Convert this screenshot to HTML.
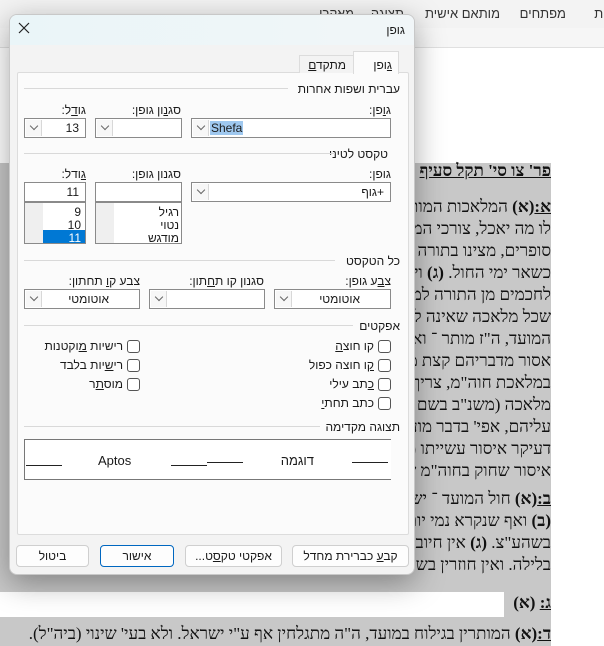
<!DOCTYPE html>
<html><head><meta charset="utf-8">
<style>
*{box-sizing:border-box;margin:0;padding:0}
body{width:604px;height:646px;position:relative;overflow:hidden;background:#fff;font-family:"Liberation Sans","DejaVu Sans",sans-serif;font-size:12px;color:#1a1a1a}
.a{position:absolute}
.r{position:absolute;direction:rtl;white-space:nowrap;line-height:14px}
.doc{position:absolute;right:53px;direction:rtl;white-space:nowrap;font-family:"Liberation Serif","DejaVu Serif",serif;font-size:17px;color:#111;line-height:22px;overflow:hidden}
.ln{position:absolute;height:1px;background:#d9d9d9}
.f{position:absolute;background:#fff;border:1px solid #8a8a8a;height:20px}
.dd{position:absolute;left:1px;top:1px;width:16px;height:16px;border-right:1px solid #d8d8d8;background:#f7f7f7}
.dd:after{content:"";position:absolute;left:5px;top:3px;width:5px;height:5px;border-right:1px solid #666;border-bottom:1px solid #666;transform:rotate(45deg)}
.ft{position:absolute;right:6px;top:2px;direction:rtl;font-size:12px;line-height:14px;white-space:nowrap}
.cb{position:absolute;width:13px;height:13px;border:1px solid #555;border-radius:3px;background:#fff}
.btn{position:absolute;top:545px;height:22px;border:1px solid #cfcfcf;border-radius:4px;background:#fdfdfd;text-align:center;line-height:20px;direction:rtl;font-size:12px;white-space:nowrap}
</style></head><body>
<div class="a" style="left:0;top:0;width:604px;height:28px;background:#f3f3f3"></div>
<div class="a" style="left:0;top:28px;width:604px;height:20px;background:#f6f6f6;border-bottom:1px solid #e0e0e0"></div>
<div class="r" style="right:-6px;top:7px;font-size:13px;color:#333">יות</div>
<div class="r" style="right:38px;top:7px;font-size:13px;color:#333">מפתחים</div>
<div class="r" style="right:104px;top:7px;font-size:13px;color:#333">מותאם אישית</div>
<div class="r" style="right:200px;top:7px;font-size:13px;color:#333">תצוגה</div>
<div class="r" style="right:250px;top:7px;font-size:13px;color:#333">מאקרו</div>

<div class="a" style="left:0;top:163px;width:551px;height:429px;background:#c8c8c8"></div>
<div class="a" style="left:0;top:592px;width:504px;height:25px;background:#fff"></div>
<div class="a" style="left:504px;top:592px;width:47px;height:25px;background:#c8c8c8"></div>
<div class="a" style="left:0;top:617px;width:551px;height:29px;background:#c8c8c8"></div>
<div class="doc" style="top:160px;width:500px;font-weight:bold;text-decoration:underline">פר' צו סי' תקל סעיף</div>
<div class="doc" style="top:196px;width:551px"><b><u>א:</u>(א)</b> המלאכות המותרות במועד הן דבר האבד ועוד שאין</div>
<div class="doc" style="top:218px;width:551px">לו מה יאכל, צורכי המועד, מעשה הדיוט, ולצורך רבים</div>
<div class="doc" style="top:240px;width:551px">סופרים, מצינו בתורה ששמעו חכמים חול המועד והם</div>
<div class="doc" style="top:262px;width:551px">כשאר ימי החול. <b>(ג)</b> ויש אומרים שהוא מדאורייתא</div>
<div class="doc" style="top:284px;width:551px">לחכמים מן התורה למסור ולהתיר מלאכה בזמן הזה</div>
<div class="doc" style="top:306px;width:551px">שכל מלאכה שאינה לצורך המועד אסורה לעשותה</div>
<div class="doc" style="top:328px;width:551px">המועד, ה"ז מותר ־ ואם לא כן אסור לעשות כלל</div>
<div class="doc" style="top:350px;width:551px">אסור מדבריהם קצת מלאכות ואפי' לצורך המועד</div>
<div class="doc" style="top:372px;width:551px">במלאכת חוה"מ, צריך ליזהר שלא לעשות שום</div>
<div class="doc" style="top:394px;width:551px">מלאכה (משנ"ב בשם הפוסקים) ואפילו דבר קל</div>
<div class="doc" style="top:416px;width:551px">עליהם, אפי' בדבר מועט אסור ויש מתירים</div>
<div class="doc" style="top:438px;width:551px">דעיקר איסור עשייתו משום כבוד המועד והשמחה</div>
<div class="doc" style="top:460px;width:551px">איסור שחוק בחוה"מ שאינו לצורך כלל</div>
<div class="doc" style="top:488px;width:551px"><b><u>ב:</u>(א)</b> חול המועד ־ יש לו דין יום טוב לענין</div>
<div class="doc" style="top:510px;width:551px"><b>(ב)</b> ואף שנקרא נמי יום טוב אינו כן לכל דבר</div>
<div class="doc" style="top:532px;width:551px">בשהע"צ. <b>(ג)</b> אין חיוב לאכול פת בחוה"מ ביום</div>
<div class="doc" style="top:554px;width:551px">בלילה. ואין חוזרין בשכח יעלה ויבוא</div>
<div class="doc" style="top:592px;width:551px"><b><u>ג:</u> (א)</b></div>
<div class="doc" style="top:623px;width:551px"><b><u>ד:</u>(א)</b> המותרין בגילוח במועד, ה"ה מתגלחין אף ע"י ישראל. ולא בעי' שינוי (ביה"ל).</div>

<!-- dialog -->
<div class="a" style="left:9px;top:14px;width:406px;height:561px;background:#f3f3f3;border:1px solid #c8c8c8;border-radius:8px;box-shadow:0 8px 30px rgba(0,0,0,.35);overflow:hidden">
 <div class="a" style="left:0;top:0;width:406px;height:30px;background:linear-gradient(90deg,#eaf5f8,#f1f6f8)"></div>
</div>
<svg class="a" style="left:18px;top:22px" width="12" height="12"><path d="M1 1L11 11M11 1L1 11" stroke="#222" stroke-width="1.2"/></svg>
<div class="r" style="right:199px;top:23px">גופן</div>

<div class="a" style="left:17px;top:72px;width:392px;height:463px;background:#fbfbfb;border:1px solid #dcdcdc;border-radius:2px"></div>
<div class="a" style="left:299px;top:55px;width:55px;height:18px;background:#f3f3f3;border:1px solid #dcdcdc;border-bottom:none"></div>
<div class="a" style="left:353px;top:51px;width:46px;height:23px;background:#fbfbfb;border:1px solid #dcdcdc;border-bottom:none"></div>
<div class="r" style="right:212px;top:58px"><u>ג</u>ופן</div>
<div class="r" style="right:258px;top:58px">מתקד<u>ם</u></div>

<!-- section 1 -->
<div class="r" style="right:204px;top:82px">עברית ושפות אחרות</div>
<div class="ln" style="left:24px;top:88px;width:264px"></div>
<div class="r" style="right:213px;top:103px">ג<u>ו</u>פן:</div>
<div class="r" style="right:423px;top:103px">סג<u>נ</u>ון גופן:</div>
<div class="r" style="right:518px;top:103px">גו<u>ד</u>ל:</div>
<div class="f" style="left:191px;top:118px;width:200px"><div class="dd"></div><div class="a" style="left:18px;top:2px;background:#9fc8ef;padding:0 1px;line-height:14px">Shefa</div></div>
<div class="f" style="left:95px;top:118px;width:87px"><div class="dd"></div></div>
<div class="f" style="left:24px;top:118px;width:62px"><div class="dd"></div><div class="ft">13</div></div>

<!-- section 2 -->
<div class="r" style="right:216px;top:147px">טקסט לטיני</div>
<div class="ln" style="left:24px;top:153px;width:311px"></div>
<div class="r" style="right:213px;top:167px">גופ<u>ן</u>:</div>
<div class="r" style="right:423px;top:167px">סגנון גופ<u>ן</u>:</div>
<div class="r" style="right:518px;top:167px"><u>ג</u>ודל:</div>
<div class="f" style="left:191px;top:182px;width:200px"><div class="dd"></div><div class="ft">+גוף</div></div>
<div class="f" style="left:95px;top:182px;width:87px"></div>
<div class="f" style="left:24px;top:182px;width:62px"><div class="ft">11</div></div>
<div class="a" style="left:95px;top:202px;width:87px;height:42px;background:#fff;border:1px solid #8a8a8a"></div>
<div class="a" style="left:96px;top:203px;width:18px;height:40px;background:#efefef"></div>
<div class="r" style="right:425px;top:205px">רגיל</div>
<div class="r" style="right:425px;top:218px">נטוי</div>
<div class="r" style="right:425px;top:231px">מודגש</div>
<div class="a" style="left:24px;top:202px;width:62px;height:42px;background:#fff;border:1px solid #8a8a8a"></div>
<div class="a" style="left:25px;top:203px;width:18px;height:40px;background:#efefef"></div>
<div class="a" style="left:43px;top:230px;width:42px;height:13px;background:#0078d4"></div>
<div class="r" style="right:523px;top:205px">9</div>
<div class="r" style="right:523px;top:218px">10</div>
<div class="r" style="right:523px;top:231px;color:#fff">11</div>

<!-- section 3 -->
<div class="r" style="right:204px;top:254px">כל הטקסט</div>
<div class="ln" style="left:24px;top:260px;width:311px"></div>
<div class="r" style="right:213px;top:274px">צ<u>ב</u>ע גופן:</div>
<div class="r" style="right:340px;top:274px">סגנון קו ת<u>ח</u>תון:</div>
<div class="r" style="right:464px;top:274px">צבע ק<u>ו</u> תחתון:</div>
<div class="f" style="left:274px;top:289px;width:117px"><div class="dd"></div><div class="ft" style="right:30px">אוטומטי</div></div>
<div class="f" style="left:149px;top:289px;width:116px"><div class="dd"></div></div>
<div class="f" style="left:24px;top:289px;width:116px"><div class="dd"></div><div class="ft" style="right:30px">אוטומטי</div></div>

<!-- effects -->
<div class="r" style="right:204px;top:319px">אפקטים</div>
<div class="ln" style="left:24px;top:325px;width:329px"></div>
<div class="cb" style="left:378px;top:340px"></div><div class="r" style="right:230px;top:339px">קו חוצ<u>ה</u></div>
<div class="cb" style="left:378px;top:359px"></div><div class="r" style="right:230px;top:358px"><u>ק</u>ו חוצה כפול</div>
<div class="cb" style="left:378px;top:378px"></div><div class="r" style="right:230px;top:377px"><u>כ</u>תב עילי</div>
<div class="cb" style="left:378px;top:397px"></div><div class="r" style="right:230px;top:396px">כתב תחת<u>י</u></div>
<div class="cb" style="left:127px;top:340px"></div><div class="r" style="right:481px;top:339px">רישיות <u>מ</u>וקטנות</div>
<div class="cb" style="left:127px;top:359px"></div><div class="r" style="right:481px;top:358px">רי<u>ש</u>יות בלבד</div>
<div class="cb" style="left:127px;top:378px"></div><div class="r" style="right:481px;top:377px">מוס<u>ת</u>ר</div>

<!-- preview -->
<div class="r" style="right:204px;top:420px">תצוגה מקדימה</div>
<div class="ln" style="left:24px;top:426px;width:296px"></div>
<div class="a" style="left:24px;top:439px;width:367px;height:41px;background:#fff;border:1px solid #777;border-right:none"></div>
<div class="a" style="left:26px;top:465px;width:36px;height:1px;background:#222"></div>
<div class="a" style="left:98px;top:453px;font-size:13px">Aptos</div>
<div class="a" style="left:171px;top:465px;width:36px;height:1px;background:#222"></div>
<div class="a" style="left:207px;top:462px;width:36px;height:1px;background:#222"></div>
<div class="r" style="right:290px;top:454px;font-size:13px">דוגמה</div>
<div class="a" style="left:352px;top:462px;width:36px;height:1px;background:#222"></div>

<!-- buttons -->
<div class="btn" style="left:16px;width:73px">ביטול</div>
<div class="btn" style="left:100px;width:74px;border-color:#0067c0">אישור</div>
<div class="btn" style="left:185px;width:97px">אפקטי טק<u>ס</u>ט...</div>
<div class="btn" style="left:292px;width:117px">קב<u>ע</u> כברירת מחדל</div>
</body></html>
